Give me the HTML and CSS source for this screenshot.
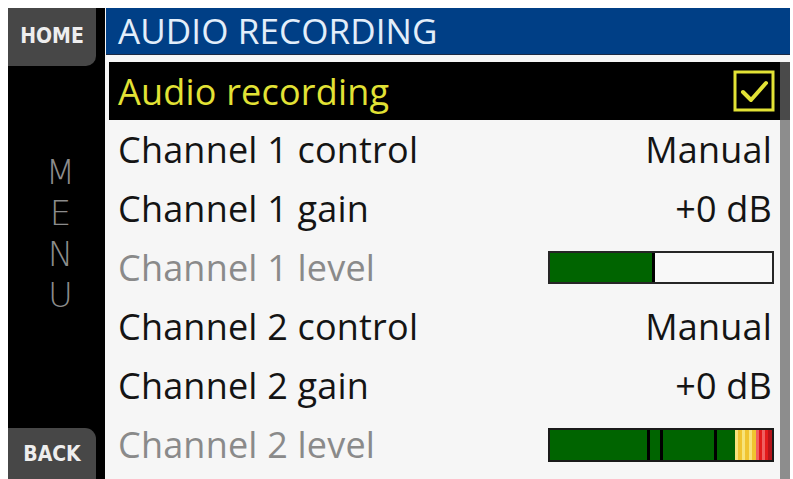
FILE: index.html
```html
<!DOCTYPE html>
<html lang="en">
<head>
<meta charset="utf-8">
<title>Audio recording</title>
<link rel="stylesheet" href="styles.css">
</head>
<body>
<div class="device">
  <aside class="side">
    <div class="btn btn-home">HOME</div>
    <div class="menu-word">
      <span>M</span><span>E</span><span>N</span><span>U</span>
    </div>
    <div class="btn btn-back">BACK</div>
  </aside>
  <main class="panel">
    <header class="title">AUDIO RECORDING</header>
    <div class="body">
      <ul class="list">
        <li class="row selected">
          <span class="label">Audio recording</span>
          <span class="check">
            <svg viewBox="0 0 42 42" width="42" height="42">
              <rect x="2" y="2" width="38" height="38" fill="none" stroke="#e2e235" stroke-width="3"/>
              <path d="M10 22 L18 30 L33 13" fill="none" stroke="#e2e235" stroke-width="4" stroke-linecap="round" stroke-linejoin="round"/>
            </svg>
          </span>
        </li>
        <li class="row"><span class="label">Channel 1 control</span><span class="value">Manual</span></li>
        <li class="row"><span class="label">Channel 1 gain</span><span class="value">+0 dB</span></li>
        <li class="row dim">
          <span class="label">Channel 1 level</span>
          <span class="meter">
            <span class="fill" style="width:46%"></span>
          </span>
        </li>
        <li class="row"><span class="label">Channel 2 control</span><span class="value">Manual</span></li>
        <li class="row"><span class="label">Channel 2 gain</span><span class="value">+0 dB</span></li>
        <li class="row dim">
          <span class="label">Channel 2 level</span>
          <span class="meter meter-full">
            <span class="seg green" style="width:97px"></span>
            <span class="seg tick"></span>
            <span class="seg green" style="width:10px"></span>
            <span class="seg tick"></span>
            <span class="seg green" style="width:51px"></span>
            <span class="seg tick"></span>
            <span class="seg green" style="width:18px"></span>
            <span class="seg ylight"></span><span class="seg yel"></span>
            <span class="seg ylight"></span><span class="seg yel"></span>
            <span class="seg ylight"></span><span class="seg yel"></span>
            <span class="seg rlight"></span><span class="seg red"></span>
            <span class="seg rlight"></span><span class="seg red"></span>
            <span class="seg rdark"></span>
          </span>
        </li>
      </ul>
      <div class="scrollbar"><div class="thumb"></div></div>
    </div>
  </main>
</div>
</body>
</html>
```

FILE: styles.css
```css
html, body {
  margin: 0;
  padding: 0;
  background: #ffffff;
}

body {
  font-family: "Open Sans", "DejaVu Sans", sans-serif;
}

.device {
  display: flex;
  margin: 8px 3px 0 8px;
  height: 471px;
  background: #f6f6f6;
}

/* left navigation column */
.side {
  width: 97px;
  background: #000;
  display: flex;
  flex-direction: column;
  justify-content: space-between;
}

.btn {
  width: 88px;
  background: #474747;
  color: #eeeeee;
  font-family: "DejaVu Sans Condensed", "DejaVu Sans", sans-serif;
  font-size: 21px;
  font-weight: bold;
  display: flex;
  align-items: center;
  justify-content: center;
}

.btn-home {
  height: 58px;
  border-bottom-right-radius: 10px;
  padding-bottom: 2px;
  box-sizing: border-box;
}

.btn-back {
  height: 51px;
  border-top-right-radius: 11px;
}

.menu-word {
  flex: 1;
  display: flex;
  flex-direction: column;
  align-items: center;
  gap: 1px;
  padding: 86px 0 0 8px;
  color: #8c8c8c;
  font-family: "DejaVu Sans", sans-serif;
  font-size: 34px;
  font-weight: 200;
  line-height: 40px;
}

/* main panel */
.panel {
  flex: 1;
  display: flex;
  flex-direction: column;
  padding-left: 1px;
}

.title {
  height: 47px;
  background: #003f86;
  border-bottom: 1px solid #1b2a44;
  box-sizing: border-box;
  color: #e3eefa;
  font-size: 35px;
  line-height: 46px;
  padding-left: 12px;
  letter-spacing: 0.1px;
}

.body {
  flex: 1;
  display: flex;
  padding: 7px 0 0 3px;
}

.list {
  flex: 1;
  list-style: none;
  margin: 0;
  padding: 0;
}

.row {
  height: 59px;
  display: flex;
  align-items: center;
  justify-content: space-between;
  padding: 0 8px 0 9px;
  font-size: 36px;
  color: #141414;
  letter-spacing: 0.2px;
}

.row.selected {
  background: #000;
  color: #e2e235;
  height: 58px;
}

.row.dim {
  color: #8a8a8a;
}

.check {
  display: flex;
  width: 42px;
  height: 42px;
  margin-right: -3px;
}

/* level meters */
.meter {
  width: 226px;
  height: 33px;
  box-sizing: border-box;
  border: 2px solid #262626;
  background: #f8f8f8;
  display: flex;
  margin-right: -2px;
}

.fill {
  display: block;
  background: #006400;
  border-right: 3px solid #000;
}

.meter-full {
  height: 34px;
  border-color: #1a1a1a;
}

.seg {
  display: block;
  height: 100%;
}

.seg.green { background: #006400; }
.seg.tick { width: 3px; background: #000; }
.seg.ylight { width: 3px; background: #f7e37a; }
.seg.yel { width: 4px; background: #f0c430; }
.seg.rlight { width: 3px; background: #f06060; }
.seg.red { width: 3px; background: #e41b1b; }
.seg.rdark { flex: 1; background: #b5141a; }

.scrollbar {
  width: 10px;
  background: #8d8d8d;
  display: flex;
  flex-direction: column;
}

.thumb {
  height: 58px;
  background: #4a4a4a;
}
```
